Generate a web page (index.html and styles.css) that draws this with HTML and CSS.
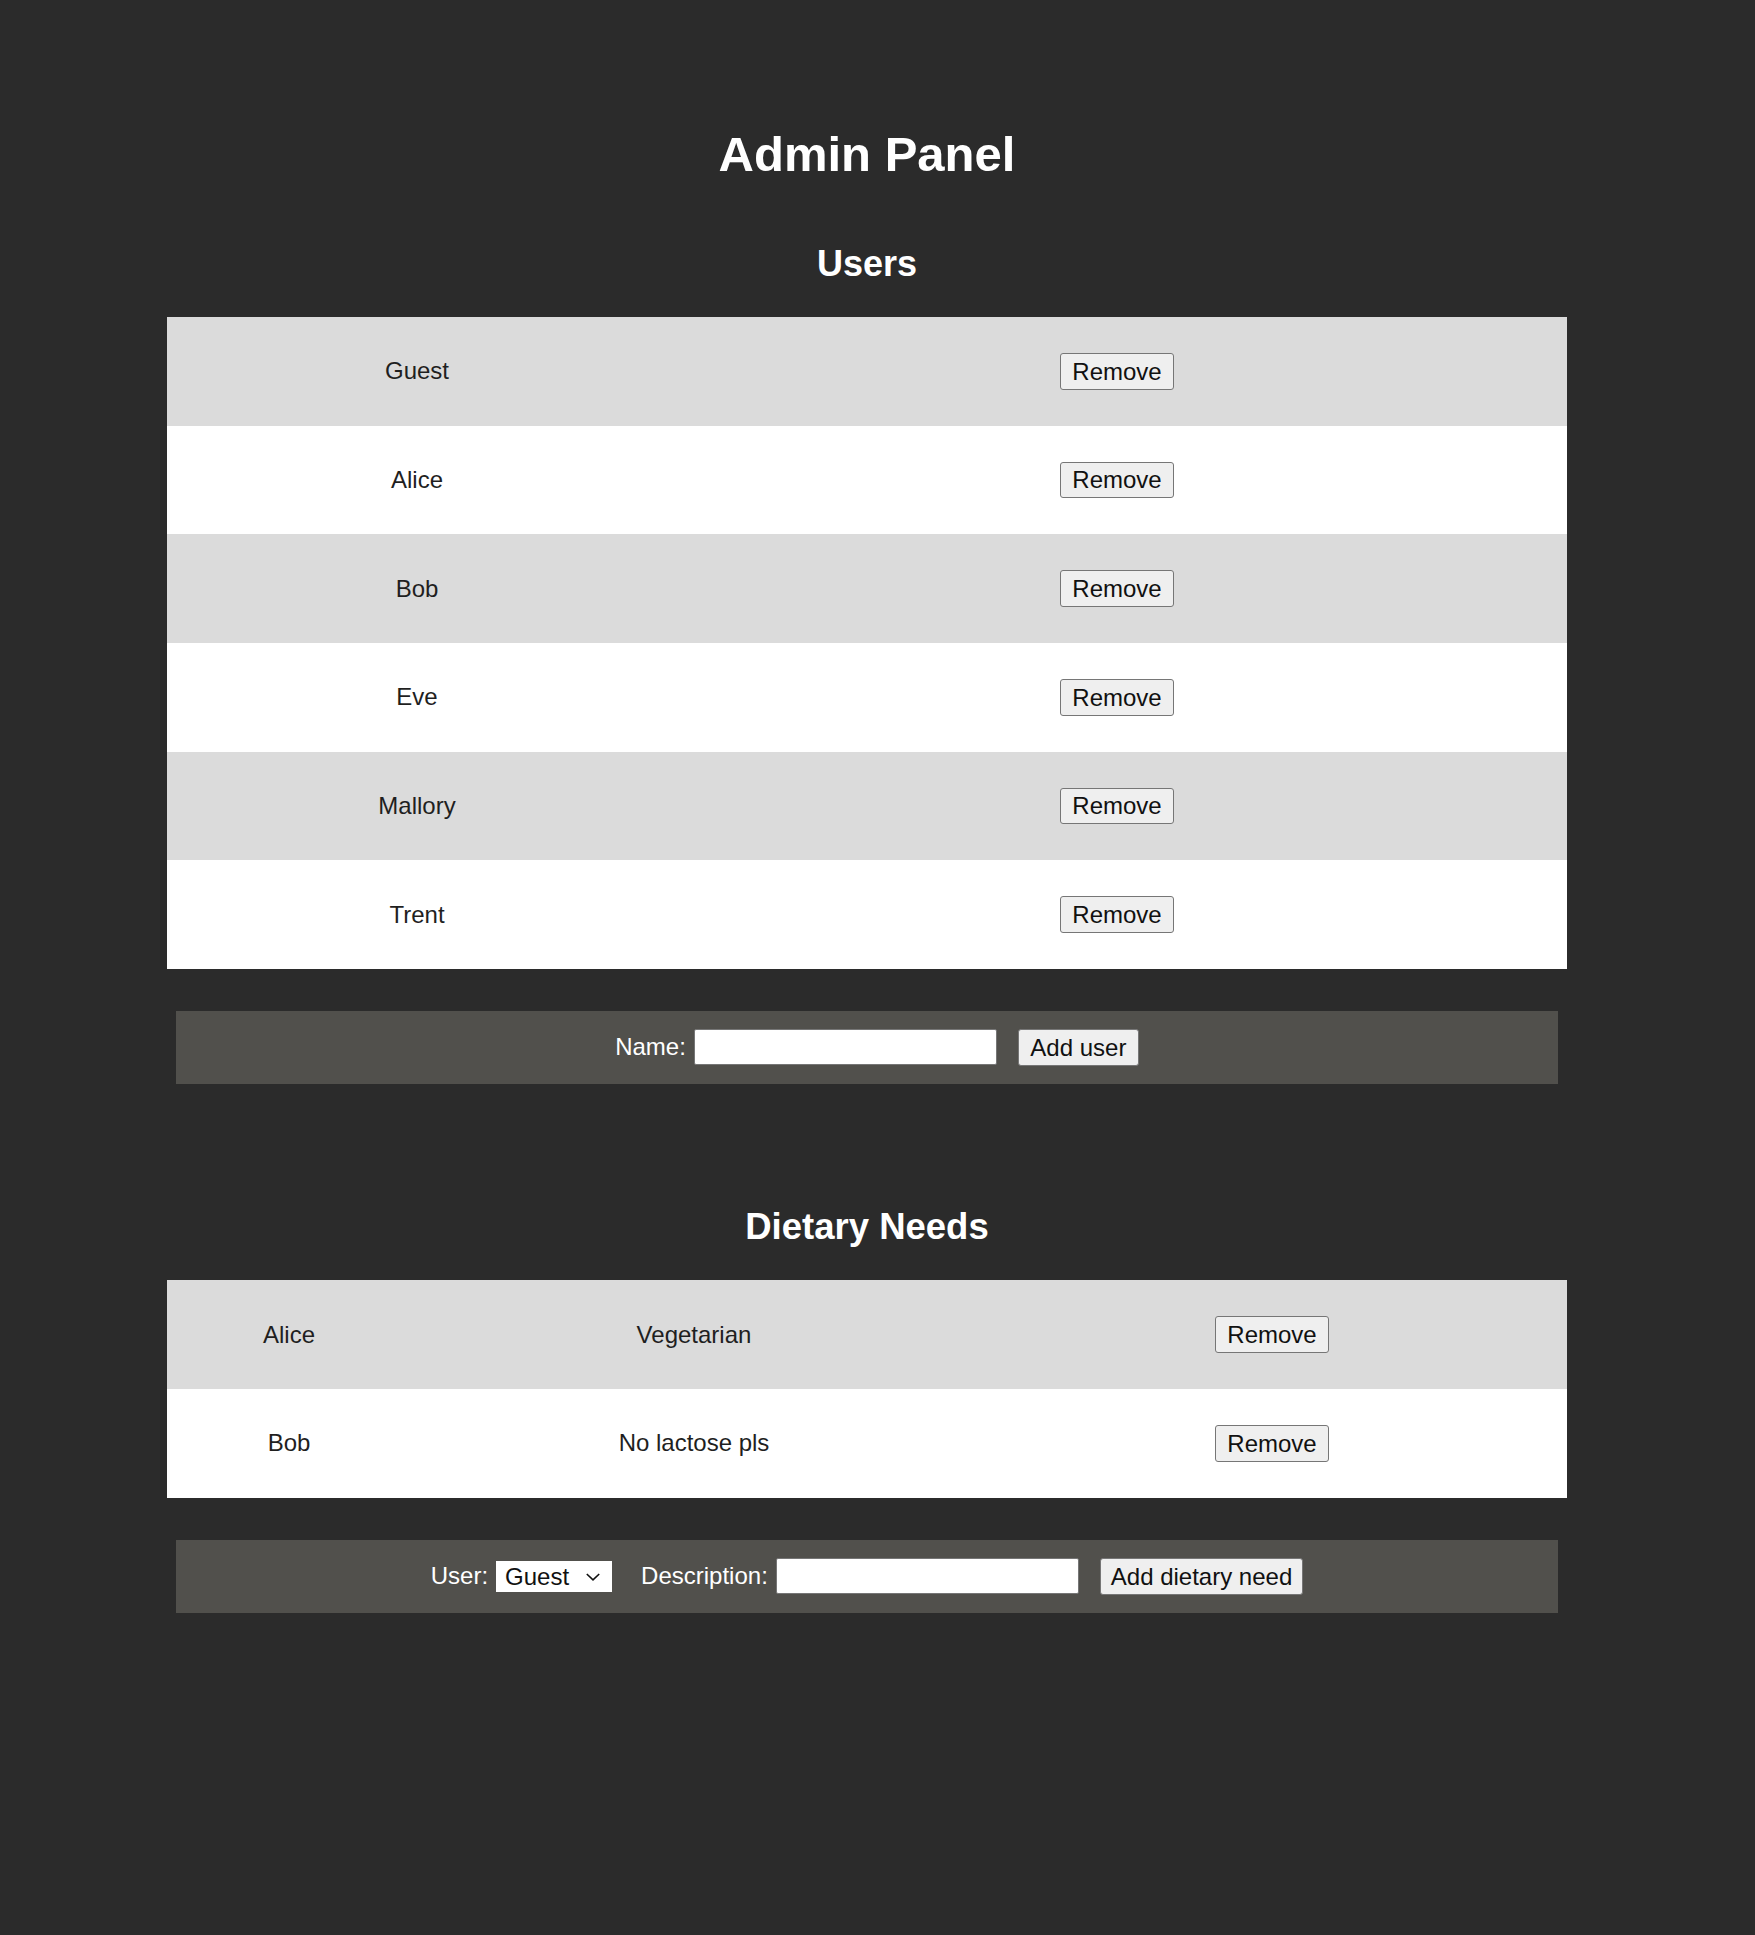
FILE: index.html
```html
<!DOCTYPE html>
<html lang="en">
<head>
<meta charset="utf-8">
<title>Admin Panel</title>
<link rel="stylesheet" href="styles.css">
</head>
<body>
<div class="page">
  <h1 class="title">Admin Panel</h1>

  <section class="section section-users">
    <h2 class="section-title">Users</h2>
    <table class="list list-users">
      <colgroup><col class="col-user"><col class="col-user-action"></colgroup>
      <tbody>
        <tr><td>Guest</td><td><button class="btn" type="button">Remove</button></td></tr>
        <tr><td>Alice</td><td><button class="btn" type="button">Remove</button></td></tr>
        <tr><td>Bob</td><td><button class="btn" type="button">Remove</button></td></tr>
        <tr><td>Eve</td><td><button class="btn" type="button">Remove</button></td></tr>
        <tr><td>Mallory</td><td><button class="btn" type="button">Remove</button></td></tr>
        <tr><td>Trent</td><td><button class="btn" type="button">Remove</button></td></tr>
      </tbody>
    </table>
    <form class="add-form add-form-user">
      <label class="lbl lbl-name" for="name">Name:</label>
      <input class="field" id="name" type="text">
      <button class="btn btn-add" type="button">Add user</button>
    </form>
  </section>

  <section class="section section-diet">
    <h2 class="section-title section-title-diet">Dietary Needs</h2>
    <table class="list list-diet">
      <colgroup><col class="col-diet-user"><col class="col-diet-desc"><col class="col-diet-action"></colgroup>
      <tbody>
        <tr><td>Alice</td><td>Vegetarian</td><td><button class="btn" type="button">Remove</button></td></tr>
        <tr><td>Bob</td><td>No lactose pls</td><td><button class="btn" type="button">Remove</button></td></tr>
      </tbody>
    </table>
    <form class="add-form add-form-diet">
      <label class="lbl lbl-user" for="user">User:</label>
      <span class="select-wrap">
        <select class="select" id="user">
          <option>Guest</option>
          <option>Alice</option>
          <option>Bob</option>
          <option>Eve</option>
          <option>Mallory</option>
          <option>Trent</option>
        </select>
        <svg class="chevron" width="14" height="8" viewBox="0 0 14 8" aria-hidden="true"><path d="M0.8 1 L7 6.8 L13.2 1" fill="none" stroke="#111" stroke-width="1.6"/></svg>
      </span>
      <label class="lbl lbl-desc" for="desc">Description:</label>
      <input class="field" id="desc" type="text">
      <button class="btn btn-add btn-add-diet" type="button">Add dietary need</button>
    </form>
  </section>
</div>
</body>
</html>
```

FILE: styles.css
```css
html, body {
  margin: 0;
  padding: 0;
  background: #2b2b2b;
}

body {
  font-family: "Liberation Sans", Arial, sans-serif;
  color: #ffffff;
  font-size: 24px;
}

.page {
  width: 1400px;
  margin-left: 167px;
  padding-top: 126px;
  padding-bottom: 200px;
}

.title {
  margin: 0;
  font-size: 49px;
  line-height: 56px;
  font-weight: bold;
  text-align: center;
  color: #ffffff;
}

.section-users {
  margin-top: 61px;
}

.section-diet {
  margin-top: 122.5px;
}

.section-title {
  margin: 0 0 33px;
  font-size: 36px;
  line-height: 41px;
  font-weight: bold;
  text-align: center;
  color: #ffffff;
}

.section-title-diet {
  font-size: 36.5px;
}

.list {
  width: 1400px;
  border-collapse: collapse;
  border-spacing: 0;
  table-layout: fixed;
}

.list td {
  height: 108.67px;
  padding: 0;
  text-align: center;
  vertical-align: middle;
  color: #1f1f1f;
  font-size: 24px;
}

.list tr:nth-child(odd) td {
  background: #dbdbdb;
}

.list tr:nth-child(even) td {
  background: #ffffff;
}

.col-user { width: 500px; }
.col-user-action { width: 900px; }

.col-diet-user { width: 244px; }
.col-diet-desc { width: 566px; }
.col-diet-action { width: 590px; }

.btn {
  font-family: "Liberation Sans", Arial, sans-serif;
  font-size: 24px;
  line-height: 27px;
  color: #111111;
  background: #efefef;
  border: 1px solid #767676;
  border-radius: 3px;
  padding: 3.8px 11.5px;
  margin: 0;
}

.add-form {
  margin: 42px 9px 0;
  height: 73px;
  background: #51504c;
  display: flex;
  align-items: center;
  justify-content: center;
}

.add-form-user {
  padding-left: 20px;
}

.lbl {
  color: #ffffff;
  font-size: 24px;
  line-height: 28px;
}

.field {
  box-sizing: border-box;
  width: 303px;
  height: 36px;
  margin: 0 0 0 8px;
  padding: 0 6px;
  border: 1px solid #767676;
  border-radius: 2px;
  background: #ffffff;
  font-family: "Liberation Sans", Arial, sans-serif;
  font-size: 24px;
}

.btn-add {
  margin-left: 21px;
}

.btn-add-diet {
  padding-left: 10px;
  padding-right: 10px;
}

.select-wrap {
  position: relative;
  display: inline-block;
  margin-left: 8px;
  margin-right: 29px;
  height: 31px;
}

.select {
  box-sizing: border-box;
  appearance: none;
  -webkit-appearance: none;
  width: 116px;
  height: 31px;
  margin: 0;
  padding: 0 0 0 8px;
  border: 1px solid #ffffff;
  border-radius: 0;
  background: #ffffff;
  color: #111111;
  font-family: "Liberation Sans", Arial, sans-serif;
  font-size: 24px;
  line-height: 29px;
}

.chevron {
  position: absolute;
  left: 90px;
  top: 12px;
  pointer-events: none;
}
```
